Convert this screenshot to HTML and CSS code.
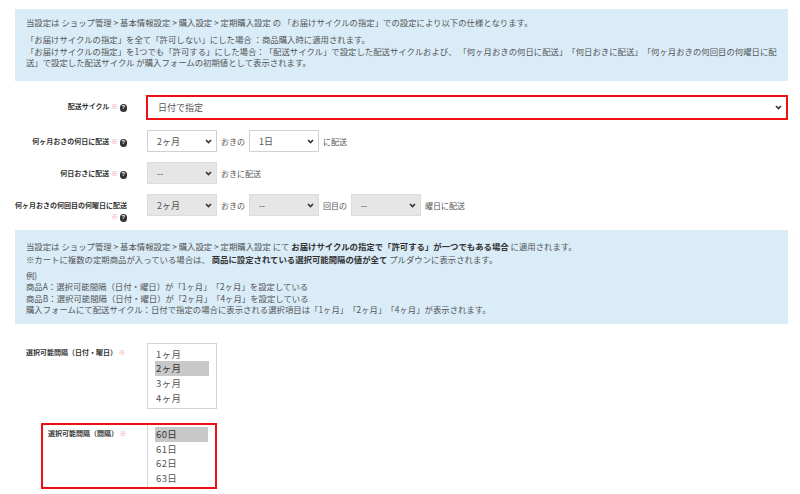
FILE: index.html
```html
<!DOCTYPE html>
<html lang="ja">
<head>
<meta charset="utf-8">
<title>定期購入設定</title>
<link rel="stylesheet" href="styles.css">
</head>
<body>
<div class="page">
  <div class="info info-top">
    <div class="line first">当設定は ショップ管理 &gt; 基本情報設定 &gt; 購入設定 &gt; 定期購入設定 の 「お届けサイクルの指定」での設定により以下の仕様となります。</div>
    <div class="line">「お届けサイクルの指定」を全て「許可しない」にした場合 ：商品購入時に適用されます。</div>
    <div class="line">「お届けサイクルの指定」を1つでも「許可する」にした場合：「配送サイクル」で設定した配送サイクルおよび、 「何ヶ月おきの何日に配送」「何日おきに配送」「何ヶ月おきの何回目の何曜日に配<br>送」で設定した配送サイクル が購入フォームの初期値として表示されます。</div>
  </div>

  <div class="form">
    <div class="row">
      <div class="label"><span class="ln">配送サイクル <span class="req">※</span> <span class="help">?</span></span></div>
      <div class="controls">
        <div class="select wide flagged"><span>日付で指定</span><svg class="chev" width="7" height="5" viewBox="0 0 7 5"><path d="M1 1 L3.5 3.6 L6 1" fill="none" stroke="#333" stroke-width="1.6"/></svg></div>
      </div>
    </div>
    <div class="row">
      <div class="label"><span class="ln">何ヶ月おきの何日に配送 <span class="req">※</span> <span class="help">?</span></span></div>
      <div class="controls">
        <div class="select"><span>2ヶ月</span><svg class="chev" width="7" height="5" viewBox="0 0 7 5"><path d="M1 1 L3.5 3.6 L6 1" fill="none" stroke="#333" stroke-width="1.6"/></svg></div>
        <span class="txt">おきの</span>
        <div class="select"><span>1日</span><svg class="chev" width="7" height="5" viewBox="0 0 7 5"><path d="M1 1 L3.5 3.6 L6 1" fill="none" stroke="#333" stroke-width="1.6"/></svg></div>
        <span class="txt">に配送</span>
      </div>
    </div>
    <div class="row">
      <div class="label"><span class="ln">何日おきに配送 <span class="req">※</span> <span class="help">?</span></span></div>
      <div class="controls">
        <div class="select disabled"><span>--</span><svg class="chev" width="7" height="5" viewBox="0 0 7 5"><path d="M1 1 L3.5 3.6 L6 1" fill="none" stroke="#333" stroke-width="1.6"/></svg></div>
        <span class="txt">おきに配送</span>
      </div>
    </div>
    <div class="row">
      <div class="label"><span class="ln">何ヶ月おきの何回目の何曜日に配送</span><span class="ln"><span class="req">※</span> <span class="help">?</span></span></div>
      <div class="controls">
        <div class="select disabled"><span>2ヶ月</span><svg class="chev" width="7" height="5" viewBox="0 0 7 5"><path d="M1 1 L3.5 3.6 L6 1" fill="none" stroke="#333" stroke-width="1.6"/></svg></div>
        <span class="txt">おきの</span>
        <div class="select disabled"><span>--</span><svg class="chev" width="7" height="5" viewBox="0 0 7 5"><path d="M1 1 L3.5 3.6 L6 1" fill="none" stroke="#333" stroke-width="1.6"/></svg></div>
        <span class="txt">回目の</span>
        <div class="select disabled"><span>--</span><svg class="chev" width="7" height="5" viewBox="0 0 7 5"><path d="M1 1 L3.5 3.6 L6 1" fill="none" stroke="#333" stroke-width="1.6"/></svg></div>
        <span class="txt">曜日に配送</span>
      </div>
    </div>
  </div>

  <div class="info info-mid">
    <div class="line l1">当設定は ショップ管理 &gt; 基本情報設定 &gt; 購入設定 &gt; 定期購入設定 にて <b>お届けサイクルの指定で「許可する」が一つでもある場合</b> に適用されます。</div>
    <div class="line l2">※カートに複数の定期商品が入っている場合は、 <b>商品に設定されている選択可能間隔の値が全て</b> プルダウンに表示されます。</div>
    <div class="line">例)</div>
    <div class="line">商品A：選択可能間隔（日付・曜日）が「1ヶ月」「2ヶ月」を設定している</div>
    <div class="line">商品B：選択可能間隔（日付・曜日）が「2ヶ月」「4ヶ月」を設定している</div>
    <div class="line">購入フォームにて配送サイクル：日付で指定の場合に表示される選択項目は「1ヶ月」「2ヶ月」「4ヶ月」が表示されます。</div>
  </div>

  <div class="lists">
    <div class="lrow">
      <div class="llabel">選択可能間隔（日付・曜日） <span class="req">※</span></div>
      <div class="listbox">
        <div class="opt">1ヶ月</div>
        <div class="opt sel">2ヶ月</div>
        <div class="opt">3ヶ月</div>
        <div class="opt">4ヶ月</div>
        <div class="opt">5ヶ月</div>
      </div>
    </div>
    <div class="lrow marked">
      <div class="llabel">選択可能間隔（間隔） <span class="req">※</span></div>
      <div class="listbox short">
        <div class="opt sel">60日</div>
        <div class="opt">61日</div>
        <div class="opt">62日</div>
        <div class="opt">63日</div>
      </div>
    </div>
  </div>
</div>
</body>
</html>
```

FILE: styles.css
```css
html, body {
  margin: 0;
  padding: 0;
  background: #fff;
}
body {
  font-family: "Noto Sans CJK JP", "Noto Sans", "Liberation Sans", sans-serif;
  color: #555;
  text-spacing-trim: space-all;
}
.page {
  padding: 9px 12px 0 15px;
}

/* info boxes */
.info {
  background: #d9ecf8;
  font-size: 8.4px;
  line-height: 11.5px;
  color: #555;
}
.info b {
  color: #333;
  font-weight: bold;
}
.info-top {
  padding: 8px 11px 12.5px;
}
.info-top .first {
  margin-bottom: 5.5px;
}
.info-mid {
  margin-top: 8px;
  padding: 11px 11px 8px;
}
.info-mid .l1 {
  margin-bottom: 2px;
}
.info-mid .l2 {
  margin-bottom: 4px;
}

/* form rows */
.form {
  margin-top: 14px;
  display: flex;
  flex-direction: column;
  gap: 9px;
}
.row {
  display: grid;
  grid-template-columns: 112px 1fr;
  column-gap: 20px;
  align-items: start;
}
.row + .row {
  margin-top: 1px;
}
.label {
  display: flex;
  flex-direction: column;
  align-items: flex-end;
  padding-top: 5.5px;
  font-size: 7px;
  line-height: 11px;
  font-weight: bold;
  color: #333;
}
.label .ln {
  white-space: nowrap;
}
.req {
  color: #f29a9a;
  font-weight: normal;
}
.help {
  display: inline-block;
  width: 7.5px;
  height: 7.5px;
  border-radius: 50%;
  background: #333;
  color: #fff;
  font-size: 6px;
  line-height: 7.5px;
  text-align: center;
  font-weight: bold;
  vertical-align: -0.5px;
  font-family: "Liberation Sans", sans-serif;
}
.controls {
  display: flex;
  align-items: center;
  gap: 4px;
}
.select {
  box-sizing: border-box;
  width: 70px;
  height: 22px;
  border: 1px solid #d0d0d0;
  background: #fff;
  display: flex;
  align-items: center;
  justify-content: space-between;
  padding: 0 4px 0 9px;
  font-size: 9px;
  color: #555;
}
.select.disabled {
  background: #e6e6e6;
  border-color: #dcdcdc;
}
.select.wide {
  width: auto;
  flex: 1;
  height: 25px;
}
.select.flagged {
  border: 2px solid #ee1111;
  margin-left: -1px;
  padding-left: 10px;
  padding-right: 4px;
}
.chev {
  display: block;
  flex: none;
}
.txt {
  font-size: 8px;
  color: #555;
  white-space: nowrap;
}

/* list boxes */
.lists {
  margin-top: 19px;
}
.lrow {
  display: flex;
  align-items: flex-start;
  padding-left: 11px;
}
.llabel {
  width: 121px;
  flex: none;
  padding-top: 4px;
  font-size: 7px;
  line-height: 11px;
  font-weight: bold;
  color: #333;
  white-space: nowrap;
}
.listbox {
  box-sizing: border-box;
  width: 70px;
  height: 66px;
  border: 1px solid #d4d4d4;
  padding: 3px 7px 0;
  overflow: hidden;
  background: #fff;
}
.opt {
  font-size: 9.5px;
  line-height: 14.7px;
  height: 14.7px;
  padding-left: 1px;
  color: #555;
  letter-spacing: 0.4px;
  white-space: nowrap;
}
.opt.sel {
  background: #c8c8c8;
  color: #333;
}
.lrow.marked {
  box-sizing: border-box;
  margin-top: 14.5px;
  margin-left: 26px;
  width: 176px;
  height: 66px;
  padding-left: 5px;
  border: 2px solid #ee1111;
}
.lrow.marked .llabel {
  width: 99px;
  padding-top: 2.5px;
}
.listbox.short {
  width: 68px;
  height: 62px;
  border-width: 0 0 0 1px;
  padding-top: 2px;
}
```
